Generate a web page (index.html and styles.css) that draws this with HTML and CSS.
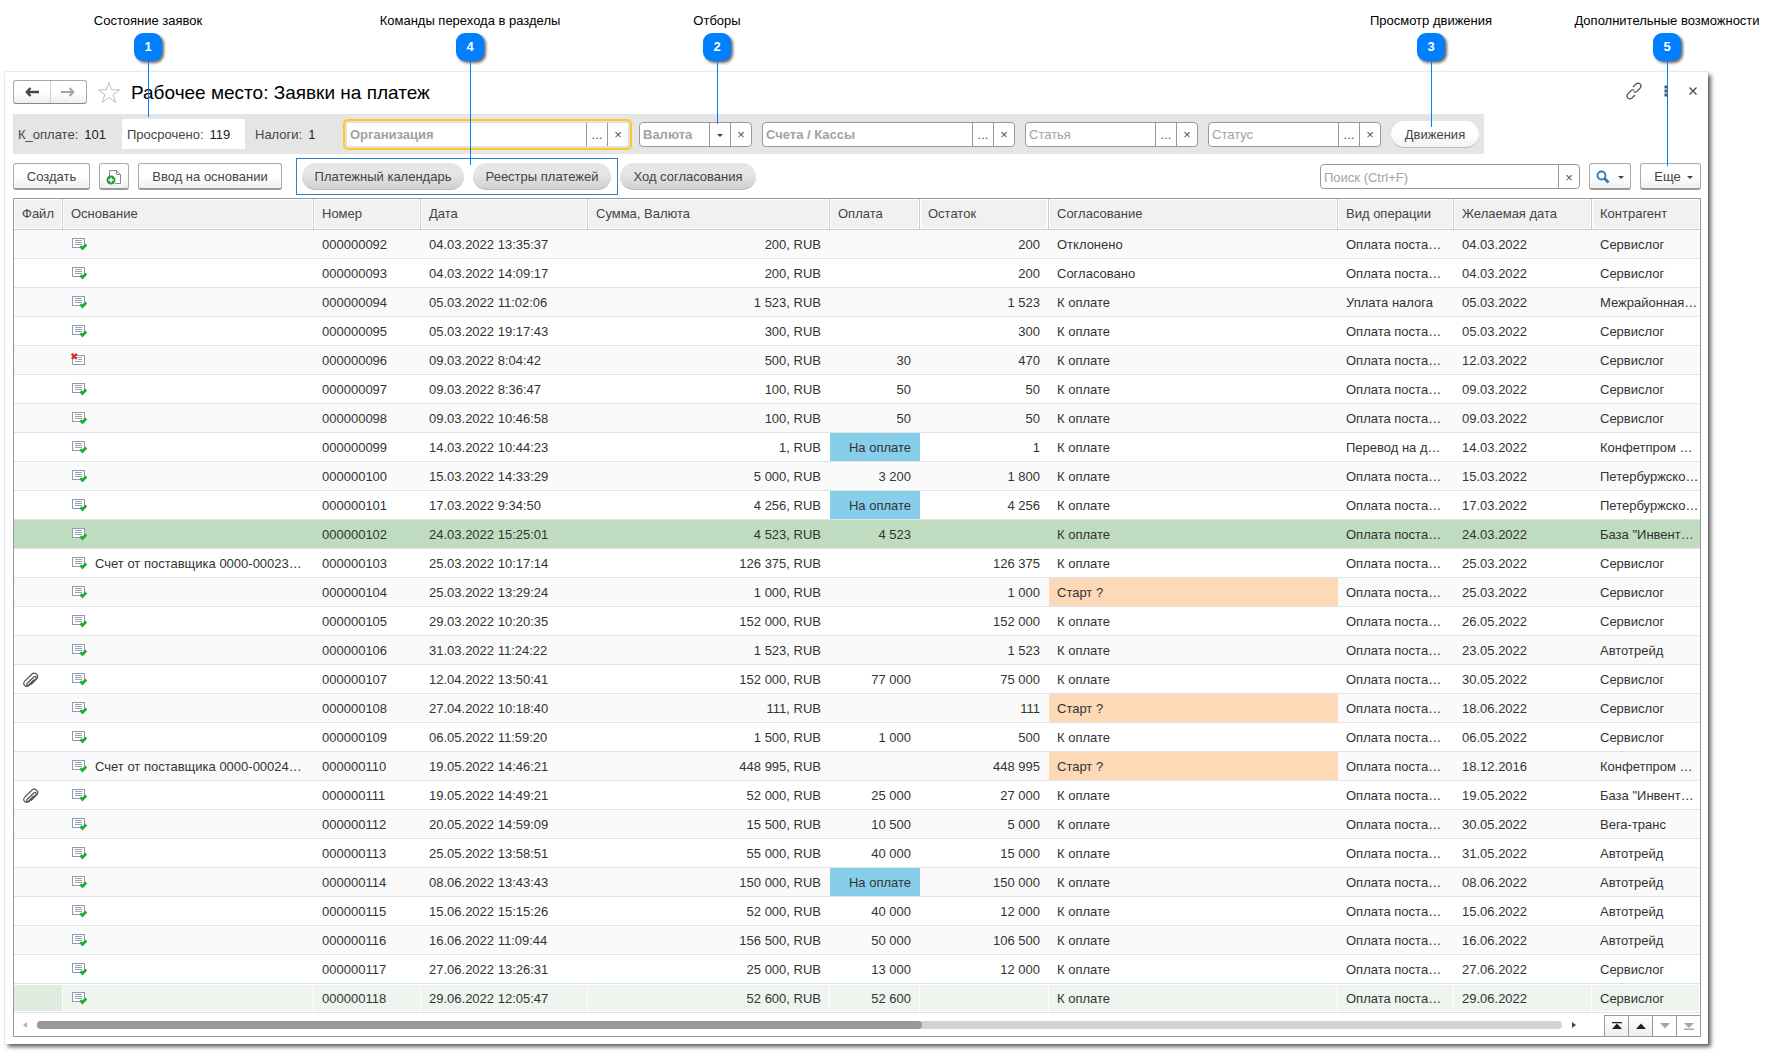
FILE: index.html
```html
<!DOCTYPE html>
<html lang="ru">
<head>
<meta charset="utf-8">
<title>Рабочее место: Заявки на платеж</title>
<link rel="stylesheet" href="styles.css">
</head>
<body>
<svg class="sprite" aria-hidden="true">
  <symbol id="doc-ok" viewBox="0 0 16 14">
    <rect x="1.5" y="1.5" width="12" height="9" fill="#fff" stroke="#8b9bb0"/>
    <path d="M4 3.5h7M4 5.5h7M4 7.5h7" stroke="#94a3b6" fill="none"/>
    <path d="M9.5 9.200l2 2.200L15.200 7.500" stroke="#1fae35" stroke-width="2.800" fill="none"/>
  </symbol>
  <symbol id="doc-del" viewBox="0 0 16 14">
    <rect x="1.5" y="2.500" width="12" height="9" fill="#fff" stroke="#8b9bb0"/>
    <path d="M7 4.500h4M7 6.500h4M4 8.500h7" stroke="#94a3b6" fill="none"/>
    <path d="M.8.8l5 5M5.800.8l-5 5" stroke="#dc2f2f" stroke-width="2.400" fill="none"/>
  </symbol>
  <symbol id="clip" viewBox="0 0 18 16">
    <path d="M5 11.500l6.500-6.300c1.800-1.700 3.800.2 2.100 2L7.300 13.200c-3.400 3.100-7.700-.8-4.500-4.100L9.500 2.500c3.400-3.200 8.300 1 5 4.700L9 12.600M5 11.500c-1 1.500.7 2.400 1.700 1.500L12 7.700" fill="none" stroke="#555" stroke-width="1.200"/>
  </symbol>
</svg>

<main class="window">
  <header class="head">
    <div class="nav">
      <button type="button" aria-label="Назад"><svg width="14" height="10" viewBox="0 0 14 10"><path d="M5.500 1L1.800 5l3.700 4M2 5h12" fill="none" stroke="#444" stroke-width="2.400"/></svg></button>
      <button type="button" aria-label="Вперед"><svg width="14" height="10" viewBox="0 0 14 10"><path d="M8.500 1l3.700 4-3.700 4M12 5H0" fill="none" stroke="#a6a6a6" stroke-width="2.200"/></svg></button>
    </div>
    <button type="button" class="plain star" aria-label="В избранное"><svg width="24" height="23" viewBox="0 0 24 23"><path d="M12 1.500l2.600 7.300h8l-6.400 4.700 2.500 7.900L12 16.600l-6.700 4.800 2.500-7.900L1.400 8.800h8z" fill="#fff" stroke="#b9bfc8"/></svg></button>
    <h1>Рабочее место: Заявки на платеж</h1>
    <div class="head-tools">
      <button type="button" class="plain" aria-label="Ссылка"><svg width="18" height="18" viewBox="0 0 18 18"><path d="M8 5l3-3c2.800-2.400 6.500.8 4.300 3.900L12 9.300c-1 .9-2.300 1-3.300.4M10 13l-3 3c-2.800 2.400-6.500-.8-4.300-3.900L6 8.700c1-.9 2.300-1 3.300-.4" fill="none" stroke="#555" stroke-width="1.300"/></svg></button>
      <button type="button" class="plain" aria-label="Меню"><svg width="4" height="12" viewBox="0 0 4 12"><path d="M.5.5h3v3h-3zM.5 4.500h3v3h-3zM.5 8.500h3v3h-3z" fill="#555"/></svg></button>
      <button type="button" class="plain" aria-label="Закрыть"><svg width="8" height="8" viewBox="0 0 8 8"><path d="M.5.5l7 7M7.500.5l-7 7" stroke="#444" stroke-width="1.200"/></svg></button>
    </div>
  </header>

  <section class="filters">
    <div class="state state-pay">К_оплате:<b>101</b></div>
    <div class="state state-late">Просрочено:<b>119</b></div>
    <div class="state state-tax">Налоги:<b>1</b></div>
    <div class="combos">
      <div class="combo org"><input type="text" class="strong" placeholder="Организация" aria-label="Организация"><button type="button">...</button><button type="button">×</button></div>
      <div class="combo cur"><input type="text" class="strong" placeholder="Валюта" aria-label="Валюта"><button type="button" aria-label="Выбрать"><i class="caret"></i></button><button type="button">×</button></div>
      <div class="combo acc"><input type="text" class="strong" placeholder="Счета / Кассы" aria-label="Счета / Кассы"><button type="button">...</button><button type="button">×</button></div>
      <div class="combo std"><input type="text" placeholder="Статья" aria-label="Статья"><button type="button">...</button><button type="button">×</button></div>
      <div class="combo std"><input type="text" placeholder="Статус" aria-label="Статус"><button type="button">...</button><button type="button">×</button></div>
      <button type="button" class="pill light">Движения</button>
    </div>
  </section>

  <section class="toolbar">
    <button type="button" class="btn create">Создать</button>
    <button type="button" class="btn icon" aria-label="Создать копированием"><svg width="16" height="18" viewBox="0 0 16 18"><path d="M3.500 9V2.500h7l4 4v9H9" fill="#fff" stroke="#7d8da3"/><path d="M10.500 2.500v4h4" fill="none" stroke="#7d8da3"/><circle cx="5" cy="12" r="4.500" fill="#2a9d3a"/><path d="M2.500 12h5M5 9.500v5" stroke="#fff" stroke-width="1.400"/></svg></button>
    <button type="button" class="btn basis">Ввод на основании</button>
    <div class="group">
      <button type="button" class="pill calendar">Платежный календарь</button>
      <button type="button" class="pill registry">Реестры платежей</button>
    </div>
    <button type="button" class="pill approve">Ход согласования</button>
    <div class="combo search"><input type="search" placeholder="Поиск (Ctrl+F)" aria-label="Поиск"><button type="button">×</button></div>
    <button type="button" class="btn find" aria-label="Найти"><svg width="14" height="14" viewBox="0 0 14 14"><circle cx="5.500" cy="5.500" r="4" fill="none" stroke="#2f78b0" stroke-width="1.800"/><path d="M8.500 8.500l4 4" stroke="#2f78b0" stroke-width="2.600"/></svg><i class="caret"></i></button>
    <button type="button" class="btn more">Еще<i class="caret"></i></button>
  </section>

  <section class="list">
    <table>
      <colgroup><col class="c-file"><col class="c-basis"><col class="c-num"><col class="c-date"><col class="c-sum"><col class="c-pay"><col class="c-rest"><col><col class="c-kind"><col class="c-wish"><col class="c-agent"></colgroup>
      <thead><tr><th>Файл</th><th>Основание</th><th>Номер</th><th>Дата</th><th>Сумма, Валюта</th><th>Оплата</th><th>Остаток</th><th>Согласование</th><th>Вид операции</th><th>Желаемая дата</th><th>Контрагент</th></tr></thead>
      <tbody>
      <tr><td></td><td><svg class="doc"><use href="#doc-ok"/></svg></td><td>000000092</td><td>04.03.2022 13:35:37</td><td class="n">200, RUB</td><td class="n"></td><td class="n">200</td><td>Отклонено</td><td>Оплата поста…</td><td>04.03.2022</td><td>Сервислог</td></tr>
      <tr><td></td><td><svg class="doc"><use href="#doc-ok"/></svg></td><td>000000093</td><td>04.03.2022 14:09:17</td><td class="n">200, RUB</td><td class="n"></td><td class="n">200</td><td>Согласовано</td><td>Оплата поста…</td><td>04.03.2022</td><td>Сервислог</td></tr>
      <tr><td></td><td><svg class="doc"><use href="#doc-ok"/></svg></td><td>000000094</td><td>05.03.2022 11:02:06</td><td class="n">1 523, RUB</td><td class="n"></td><td class="n">1 523</td><td>К оплате</td><td>Уплата налога</td><td>05.03.2022</td><td>Межрайонная…</td></tr>
      <tr><td></td><td><svg class="doc"><use href="#doc-ok"/></svg></td><td>000000095</td><td>05.03.2022 19:17:43</td><td class="n">300, RUB</td><td class="n"></td><td class="n">300</td><td>К оплате</td><td>Оплата поста…</td><td>05.03.2022</td><td>Сервислог</td></tr>
      <tr><td></td><td><svg class="doc"><use href="#doc-del"/></svg></td><td>000000096</td><td>09.03.2022 8:04:42</td><td class="n">500, RUB</td><td class="n">30</td><td class="n">470</td><td>К оплате</td><td>Оплата поста…</td><td>12.03.2022</td><td>Сервислог</td></tr>
      <tr><td></td><td><svg class="doc"><use href="#doc-ok"/></svg></td><td>000000097</td><td>09.03.2022 8:36:47</td><td class="n">100, RUB</td><td class="n">50</td><td class="n">50</td><td>К оплате</td><td>Оплата поста…</td><td>09.03.2022</td><td>Сервислог</td></tr>
      <tr><td></td><td><svg class="doc"><use href="#doc-ok"/></svg></td><td>000000098</td><td>09.03.2022 10:46:58</td><td class="n">100, RUB</td><td class="n">50</td><td class="n">50</td><td>К оплате</td><td>Оплата поста…</td><td>09.03.2022</td><td>Сервислог</td></tr>
      <tr><td></td><td><svg class="doc"><use href="#doc-ok"/></svg></td><td>000000099</td><td>14.03.2022 10:44:23</td><td class="n">1, RUB</td><td class="n paying">На оплате</td><td class="n">1</td><td>К оплате</td><td>Перевод на д…</td><td>14.03.2022</td><td>Конфетпром …</td></tr>
      <tr><td></td><td><svg class="doc"><use href="#doc-ok"/></svg></td><td>000000100</td><td>15.03.2022 14:33:29</td><td class="n">5 000, RUB</td><td class="n">3 200</td><td class="n">1 800</td><td>К оплате</td><td>Оплата поста…</td><td>15.03.2022</td><td>Петербуржско…</td></tr>
      <tr><td></td><td><svg class="doc"><use href="#doc-ok"/></svg></td><td>000000101</td><td>17.03.2022 9:34:50</td><td class="n">4 256, RUB</td><td class="n paying">На оплате</td><td class="n">4 256</td><td>К оплате</td><td>Оплата поста…</td><td>17.03.2022</td><td>Петербуржско…</td></tr>
      <tr class="paid"><td></td><td><svg class="doc"><use href="#doc-ok"/></svg></td><td>000000102</td><td>24.03.2022 15:25:01</td><td class="n">4 523, RUB</td><td class="n">4 523</td><td class="n"></td><td>К оплате</td><td>Оплата поста…</td><td>24.03.2022</td><td>База "Инвент…</td></tr>
      <tr><td></td><td><svg class="doc"><use href="#doc-ok"/></svg>Счет от поставщика 0000-00023…</td><td>000000103</td><td>25.03.2022 10:17:14</td><td class="n">126 375, RUB</td><td class="n"></td><td class="n">126 375</td><td>К оплате</td><td>Оплата поста…</td><td>25.03.2022</td><td>Сервислог</td></tr>
      <tr><td></td><td><svg class="doc"><use href="#doc-ok"/></svg></td><td>000000104</td><td>25.03.2022 13:29:24</td><td class="n">1 000, RUB</td><td class="n"></td><td class="n">1 000</td><td class="start">Старт ?</td><td>Оплата поста…</td><td>25.03.2022</td><td>Сервислог</td></tr>
      <tr><td></td><td><svg class="doc"><use href="#doc-ok"/></svg></td><td>000000105</td><td>29.03.2022 10:20:35</td><td class="n">152 000, RUB</td><td class="n"></td><td class="n">152 000</td><td>К оплате</td><td>Оплата поста…</td><td>26.05.2022</td><td>Сервислог</td></tr>
      <tr><td></td><td><svg class="doc"><use href="#doc-ok"/></svg></td><td>000000106</td><td>31.03.2022 11:24:22</td><td class="n">1 523, RUB</td><td class="n"></td><td class="n">1 523</td><td>К оплате</td><td>Оплата поста…</td><td>23.05.2022</td><td>Автотрейд</td></tr>
      <tr><td><svg class="clip"><use href="#clip"/></svg></td><td><svg class="doc"><use href="#doc-ok"/></svg></td><td>000000107</td><td>12.04.2022 13:50:41</td><td class="n">152 000, RUB</td><td class="n">77 000</td><td class="n">75 000</td><td>К оплате</td><td>Оплата поста…</td><td>30.05.2022</td><td>Сервислог</td></tr>
      <tr><td></td><td><svg class="doc"><use href="#doc-ok"/></svg></td><td>000000108</td><td>27.04.2022 10:18:40</td><td class="n">111, RUB</td><td class="n"></td><td class="n">111</td><td class="start">Старт ?</td><td>Оплата поста…</td><td>18.06.2022</td><td>Сервислог</td></tr>
      <tr><td></td><td><svg class="doc"><use href="#doc-ok"/></svg></td><td>000000109</td><td>06.05.2022 11:59:20</td><td class="n">1 500, RUB</td><td class="n">1 000</td><td class="n">500</td><td>К оплате</td><td>Оплата поста…</td><td>06.05.2022</td><td>Сервислог</td></tr>
      <tr><td></td><td><svg class="doc"><use href="#doc-ok"/></svg>Счет от поставщика 0000-00024…</td><td>000000110</td><td>19.05.2022 14:46:21</td><td class="n">448 995, RUB</td><td class="n"></td><td class="n">448 995</td><td class="start">Старт ?</td><td>Оплата поста…</td><td>18.12.2016</td><td>Конфетпром …</td></tr>
      <tr><td><svg class="clip"><use href="#clip"/></svg></td><td><svg class="doc"><use href="#doc-ok"/></svg></td><td>000000111</td><td>19.05.2022 14:49:21</td><td class="n">52 000, RUB</td><td class="n">25 000</td><td class="n">27 000</td><td>К оплате</td><td>Оплата поста…</td><td>19.05.2022</td><td>База "Инвент…</td></tr>
      <tr><td></td><td><svg class="doc"><use href="#doc-ok"/></svg></td><td>000000112</td><td>20.05.2022 14:59:09</td><td class="n">15 500, RUB</td><td class="n">10 500</td><td class="n">5 000</td><td>К оплате</td><td>Оплата поста…</td><td>30.05.2022</td><td>Вега-транс</td></tr>
      <tr><td></td><td><svg class="doc"><use href="#doc-ok"/></svg></td><td>000000113</td><td>25.05.2022 13:58:51</td><td class="n">55 000, RUB</td><td class="n">40 000</td><td class="n">15 000</td><td>К оплате</td><td>Оплата поста…</td><td>31.05.2022</td><td>Автотрейд</td></tr>
      <tr><td></td><td><svg class="doc"><use href="#doc-ok"/></svg></td><td>000000114</td><td>08.06.2022 13:43:43</td><td class="n">150 000, RUB</td><td class="n paying">На оплате</td><td class="n">150 000</td><td>К оплате</td><td>Оплата поста…</td><td>08.06.2022</td><td>Автотрейд</td></tr>
      <tr><td></td><td><svg class="doc"><use href="#doc-ok"/></svg></td><td>000000115</td><td>15.06.2022 15:15:26</td><td class="n">52 000, RUB</td><td class="n">40 000</td><td class="n">12 000</td><td>К оплате</td><td>Оплата поста…</td><td>15.06.2022</td><td>Автотрейд</td></tr>
      <tr><td></td><td><svg class="doc"><use href="#doc-ok"/></svg></td><td>000000116</td><td>16.06.2022 11:09:44</td><td class="n">156 500, RUB</td><td class="n">50 000</td><td class="n">106 500</td><td>К оплате</td><td>Оплата поста…</td><td>16.06.2022</td><td>Автотрейд</td></tr>
      <tr><td></td><td><svg class="doc"><use href="#doc-ok"/></svg></td><td>000000117</td><td>27.06.2022 13:26:31</td><td class="n">25 000, RUB</td><td class="n">13 000</td><td class="n">12 000</td><td>К оплате</td><td>Оплата поста…</td><td>27.06.2022</td><td>Сервислог</td></tr>
      <tr class="current"><td></td><td><svg class="doc"><use href="#doc-ok"/></svg></td><td>000000118</td><td>29.06.2022 12:05:47</td><td class="n">52 600, RUB</td><td class="n">52 600</td><td class="n"></td><td>К оплате</td><td>Оплата поста…</td><td>29.06.2022</td><td>Сервислог</td></tr>
      </tbody>
    </table>
    <footer class="scroll">
      <svg width="4" height="6" viewBox="0 0 4 6"><path d="M4 0v6L0 3z" fill="#b5b5b5"/></svg>
      <div class="track"><div class="thumb"></div></div>
      <svg width="4" height="6" viewBox="0 0 4 6"><path d="M0 0v6l4-3z" fill="#444"/></svg>
      <div class="pager">
        <button type="button" aria-label="В начало"><svg width="10" height="8" viewBox="0 0 10 8"><path d="M0 0h10v1.200H0zM5 1.500L10 7H0z" fill="#222"/></svg></button>
        <button type="button" aria-label="Вверх"><svg width="10" height="8" viewBox="0 0 10 8"><path d="M5 1.500L10 7H0z" fill="#222"/></svg></button>
        <button type="button" class="off" aria-label="Вниз" disabled><svg width="10" height="8" viewBox="0 0 10 8"><path d="M5 6.500L10 1H0z" fill="#a8a8a8"/></svg></button>
        <button type="button" class="off" aria-label="В конец" disabled><svg width="10" height="8" viewBox="0 0 10 8"><path d="M5 6L10 1H0zM0 6.500h10V8H0z" fill="#a8a8a8"/></svg></button>
      </div>
    </footer>
  </section>
</main>

<div class="callout k1"><span>Состояние заявок</span><b>1</b><i></i></div>
<div class="callout k4"><span>Команды перехода в разделы</span><b>4</b><i></i></div>
<div class="callout k2"><span>Отборы</span><b>2</b><i></i></div>
<div class="callout k3"><span>Просмотр движения</span><b>3</b><i></i></div>
<div class="callout k5"><span>Дополнительные возможности</span><b>5</b><i></i></div>
</body>
</html>
```
FILE: styles.css
```css
* { box-sizing: border-box; }
body {
  margin: 0;
  position: relative;
  background: #fff;
  color: #333;
  font: 13px/16px "Liberation Sans", Arial, sans-serif;
}
button, input { font: inherit; color: inherit; margin: 0; padding: 0; border: 0; background: none; }
.sprite { position: absolute; width: 0; height: 0; }

.window {
  margin: 72px 66px 9px 5px;
  padding: 8px 7px 7px 8px;
  background: #fff;
  box-shadow: 3px 3px 4px rgba(0, 0, 0, .6), 0 0 0 1px #efefef;
}

/* title row */
.head { display: flex; align-items: center; height: 24px; }
.nav {
  display: flex;
  width: 74px;
  height: 24px;
  border: 1px solid #a8a8a8;
  border-bottom-color: #888;
  border-radius: 3px;
  background: linear-gradient(#fff 50%, #eee);
}
.nav button { flex: 1; display: flex; align-items: center; justify-content: center; }
.nav button + button { border-left: 1px solid #d0d0d0; }
.plain { display: flex; }
.star { margin: 0 10px; }
h1 { margin: 0; padding-top: 2px; color: #000; font-size: 19px; line-height: 24px; font-weight: 400; white-space: nowrap; }
.head-tools { display: flex; align-items: center; gap: 21px; margin: 0 4px 2px auto; }

/* status counters and filters */
.filters {
  display: flex;
  align-items: center;
  width: max-content;
  height: 40px;
  margin-top: 10px;
  padding-right: 5px;
  background: #e5e5e5;
}
.state { display: flex; align-items: center; height: 30px; padding: 2px 0 0 5px; white-space: nowrap; color: #444; }
.state b { margin-left: 6px; font-weight: 400; color: #222; }
.state-pay { width: 109px; }
.state-late { width: 123px; background: #fff; }
.state-tax { width: 101px; padding-left: 10px; }
.combos { display: flex; align-items: center; gap: 10px; }
.combo {
  display: flex;
  height: 25px;
  border: 1px solid #999;
  border-radius: 4px;
  background: #fff;
  overflow: hidden;
}
.combo input { flex: 1; min-width: 0; padding: 2px 0 0 3px; outline: 0; }
.combo input::placeholder { color: #a2a2a2; opacity: 1; }
.combo .strong { font-weight: 700; }
.combo button { width: 21px; padding-top: 2px; border-left: 1px solid #999; display: flex; align-items: center; justify-content: center; color: #555; }
.org { width: 283px; border-color: #ddd; outline: 2px solid #fbca21; outline-offset: 1px; border-radius: 2px; }
.cur { width: 113px; }
.acc { width: 253px; }
.std { width: 173px; }
.caret { border: 3px solid transparent; border-top-color: #444; border-bottom: 0; }

/* command bar */
.toolbar { display: flex; align-items: center; height: 37px; margin: 4px 0 3px; }
.btn {
  display: flex;
  align-items: center;
  justify-content: center;
  height: 27px;
  margin-right: 9px;
  padding-top: 2px;
  border: 1px solid #aaa;
  border-bottom: 2px solid #999;
  border-radius: 3px;
  background: linear-gradient(#fff 50%, #f0f0f0);
  color: #444;
  white-space: nowrap;
}
.create { width: 77px; }
.icon { width: 30px; }
.basis { width: 144px; margin-right: 14px; }
.pill {
  height: 27px;
  padding-top: 2px;
  border-radius: 14px;
  border-bottom: 1px solid #bbb;
  background: linear-gradient(#e6e6e6 40%, #d0d0d0);
  color: #444;
  white-space: nowrap;
}
.light { width: 88px; background: linear-gradient(#fff 50%, #f2f2f2); }
.group { display: flex; align-items: center; gap: 9px; height: 37px; padding: 0 6px 0 5px; margin-right: 2px; border: 1px solid #2f7fc4; }
.calendar { width: 162px; }
.registry { width: 138px; }
.approve { width: 136px; }
.search { width: 260px; margin-left: auto; margin-right: 9px; }
.find { width: 42px; gap: 8px; }
.more { width: 61px; margin-right: 0; gap: 6px; padding-left: 6px; }

/* list of requests */
.list { border: 1px solid #999; }
table { width: 100%; table-layout: fixed; border-collapse: separate; border-spacing: 0; }
.c-file { width: 49px; }
.c-basis { width: 251px; }
.c-num { width: 107px; }
.c-date { width: 167px; }
.c-sum { width: 242px; }
.c-pay { width: 90px; }
.c-rest { width: 129px; }
.c-kind { width: 116px; }
.c-wish { width: 138px; }
.c-agent { width: 108px; }
th {
  height: 31px;
  padding: 0 0 0 8px;
  border-right: 1px solid #ccc;
  border-bottom: 1px solid #ccc;
  background: #f1f1f1;
  box-shadow: inset 0 0 0 1px #fff;
  color: #444;
  font-weight: 400;
  text-align: left;
  white-space: nowrap;
}
th:last-child { border-right: 0; }
td { height: 29px; padding: 2px 0 0 8px; border-bottom: 1px solid #e3e3e3; overflow: hidden; white-space: nowrap; }
tbody tr:nth-child(odd) { background: #fafafa; }
.n { padding: 2px 9px 0 0; text-align: right; }
.doc { width: 16px; height: 14px; margin: 0 8px 2px 0; vertical-align: middle; }
.clip { display: block; width: 18px; height: 16px; }
tbody .paying { background: #87ceeb; }
tbody .start { background: #fed9b7; }
tbody tr.paid:nth-child(n) { background: #c0dcc0; }
tbody tr.current:nth-child(n) { background: #edf5ee; }
.current td { border-right: 1px solid #fff; box-shadow: inset 0 1px #fff, inset 0 -1px #fff; }
.current .n { padding-right: 8px; }
.current td:first-child { background: #deeddf; }

.scroll { display: flex; align-items: center; height: 23px; padding-left: 9px; }
.track { flex: 1; height: 8px; margin: 0 10px; border-radius: 4px; background: #d3d3d3; }
.thumb { width: 58%; height: 8px; border-radius: 4px; background: #999; }
.pager { display: flex; align-self: flex-end; height: 21px; margin-left: 28px; border-top: 1px solid #999; }
.pager button { width: 24px; border-left: 1px solid #999; display: flex; align-items: center; justify-content: center; background: linear-gradient(#fff, #eee); }
.pager .off { background: #fff; }

/* numbered callouts over the window */
.callout { position: absolute; top: 13px; width: 200px; display: flex; flex-direction: column; align-items: center; color: #000; pointer-events: none; white-space: nowrap; }
.callout b {
  width: 28px;
  height: 28px;
  margin-top: 4px;
  border-radius: 9px;
  background: #0080ff;
  box-shadow: 2px 2px 3px rgba(0, 0, 0, .6);
  color: #fff;
  line-height: 28px;
  text-align: center;
}
.callout i { width: 1px; background: #0080ff; }
.k1 { left: 48px; }
.k1 i { height: 56px; }
.k2 { left: 617px; }
.k2 i { height: 63px; }
.k3 { left: 1331px; }
.k3 i { height: 66px; }
.k4 { left: 370px; }
.k4 i { height: 104px; }
.k5 { right: 7px; }
.k5 i { height: 105px; }
```
